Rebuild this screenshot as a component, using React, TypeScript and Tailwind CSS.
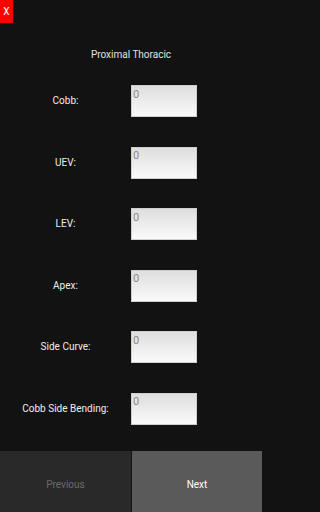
const fields = ['Cobb:', 'UEV:', 'LEV:', 'Apex:', 'Side Curve:', 'Cobb Side Bending:'];

function FieldRow({ label }: { label: string }) {
  return (
    <div className="flex items-center">
      <div className="w-[131px] text-center text-[10px] leading-[14px] text-[#eeeeee]">{label}</div>
      <input
        type="text"
        placeholder="0"
        className="h-[32px] w-[66px] border border-[#cfcfcf] bg-gradient-to-b from-[#dedede] to-[#fafafa] px-[1px] pb-[14px] text-[11px] leading-[14px] text-black placeholder:text-[#8a8a8a] outline-none"
      />
    </div>
  );
}

export default function App() {
  return (
    <div className="min-h-[512px] w-full bg-[#121212]">
      <div
        className="relative flex h-[512px] w-[262px] flex-col bg-[#121212]"
        style={{ fontFamily: 'Roboto, "Liberation Sans", sans-serif' }}
      >
        <button className="absolute left-0 top-0 h-[23px] w-[13px] bg-[#ff0000] text-[10px] leading-[23px] text-white">
          X
        </button>

        <div className="pt-[48px] text-center text-[10px] leading-[14px] text-[#e0e0e0]">Proximal Thoracic</div>

        <div className="mt-[23px] flex flex-col gap-[29.5px]">
          {fields.map((f) => (
            <FieldRow key={f} label={f} />
          ))}
        </div>

        <div className="mt-auto flex h-[61px] gap-px">
          <button className="w-[131px] bg-[#292929] pt-[5px] text-[10px] text-[#6b6b6b]">Previous</button>
          <button className="flex-1 bg-[#5a5a5a] pt-[5px] text-[10px] text-white">Next</button>
        </div>
      </div>
    </div>
  );
}
